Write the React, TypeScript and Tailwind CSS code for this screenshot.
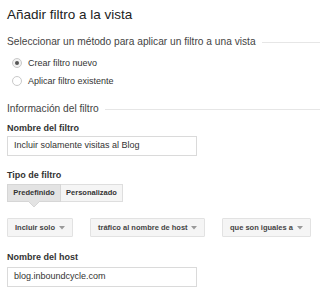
import React from "react";

function Caret() {
  return (
    <svg width="6" height="4" viewBox="0 0 6 4" className="shrink-0">
      <path d="M0 0 L6 0 L3 3.5 Z" fill="#9a9a9a" />
    </svg>
  );
}

function Dropdown({ label, width }: { label: string; width: string }) {
  return (
    <div
      className={`${width} h-[19px] flex items-center justify-between pl-[7px] pr-[7px] bg-[#f5f5f5] border border-[#e2e2e2] rounded-[1px]`}
    >
      <span className="text-[7.5px] font-bold text-[#444] leading-none whitespace-nowrap">{label}</span>
      <Caret />
    </div>
  );
}

export default function App() {
  return (
    <div className="w-[320px] h-[294px] bg-white overflow-hidden pl-[7px] font-['Liberation_Sans',Arial,sans-serif] text-[#333]">
      <div className="mt-[7px] h-[16px] text-[13.5px] leading-[16px] text-[#222] whitespace-nowrap">
        Añadir filtro a la vista
      </div>

      <div className="mt-[13px] h-[12px] flex items-center">
        <span className="text-[10.2px] leading-[12px] text-[#444] whitespace-nowrap">
          Seleccionar un método para aplicar un filtro a una vista
        </span>
        <div className="flex-1 ml-[6px] h-px bg-[#e6e6e6]" />
      </div>

      <div className="mt-[9px] h-[12px] flex items-center pl-[5px]">
        <div className="w-[10px] h-[10px] rounded-full border border-[#c9c9c9] bg-[#f1f1f1] flex items-center justify-center">
          <div className="w-[4px] h-[4px] rounded-full bg-[#555]" />
        </div>
        <span className="ml-[6px] text-[9px] leading-[12px] text-[#333] whitespace-nowrap">Crear filtro nuevo</span>
      </div>
      <div className="mt-[6px] h-[12px] flex items-center pl-[5px]">
        <div className="w-[10px] h-[10px] rounded-full border border-[#c9c9c9] bg-white" />
        <span className="ml-[6px] text-[9px] leading-[12px] text-[#333] whitespace-nowrap">Aplicar filtro existente</span>
      </div>

      <div className="mt-[16px] h-[12px] flex items-center">
        <span className="text-[10.2px] leading-[12px] text-[#444] whitespace-nowrap">Información del filtro</span>
        <div className="flex-1 ml-[6px] h-px bg-[#e6e6e6]" />
      </div>

      <div className="mt-[8px] h-[11px] text-[9px] leading-[11px] font-bold text-[#333]">Nombre del filtro</div>
      <div className="mt-[2px] w-[190px] h-[20px] border border-[#dadada] flex items-center pl-[6px] text-[9px] text-[#333]">
        Incluir solamente visitas al Blog
      </div>

      <div className="mt-[14px] h-[11px] text-[9px] leading-[11px] font-bold text-[#333]">Tipo de filtro</div>
      <div className="mt-[3px] relative flex w-[116px] h-[18px]">
        <div className="w-[54px] h-full flex items-center justify-center bg-[#e3e3e3] border border-[#d6d6d6] text-[7.5px] font-bold text-[#333]">
          Predefinido
        </div>
        <div className="w-[62px] h-full flex items-center justify-center bg-[#f5f5f5] border border-l-0 border-[#dedede] text-[7.5px] font-bold text-[#333]">
          Personalizado
        </div>
        <svg
          width="12"
          height="7"
          viewBox="0 0 12 7"
          className="absolute left-[21px] top-[17px]"
        >
          <path d="M0 0 L12 0 L6 6 Z" fill="#e3e3e3" />
          <path d="M0 0 L6 6 L12 0" fill="none" stroke="#d6d6d6" strokeWidth="1" />
        </svg>
      </div>

      <div className="mt-[16px] flex gap-[17px]">
        <Dropdown label="Incluir solo" width="w-[66px]" />
        <Dropdown label="tráfico al nombre de host" width="w-[115px]" />
        <Dropdown label="que son iguales a" width="w-[89px]" />
      </div>

      <div className="mt-[15px] h-[11px] text-[9px] leading-[11px] font-bold text-[#333]">Nombre del host</div>
      <div className="mt-[4px] w-[190px] h-[20px] border border-[#dadada] flex items-center pl-[6px] text-[9px] text-[#333]">
        blog.inboundcycle.com
      </div>
    </div>
  );
}
